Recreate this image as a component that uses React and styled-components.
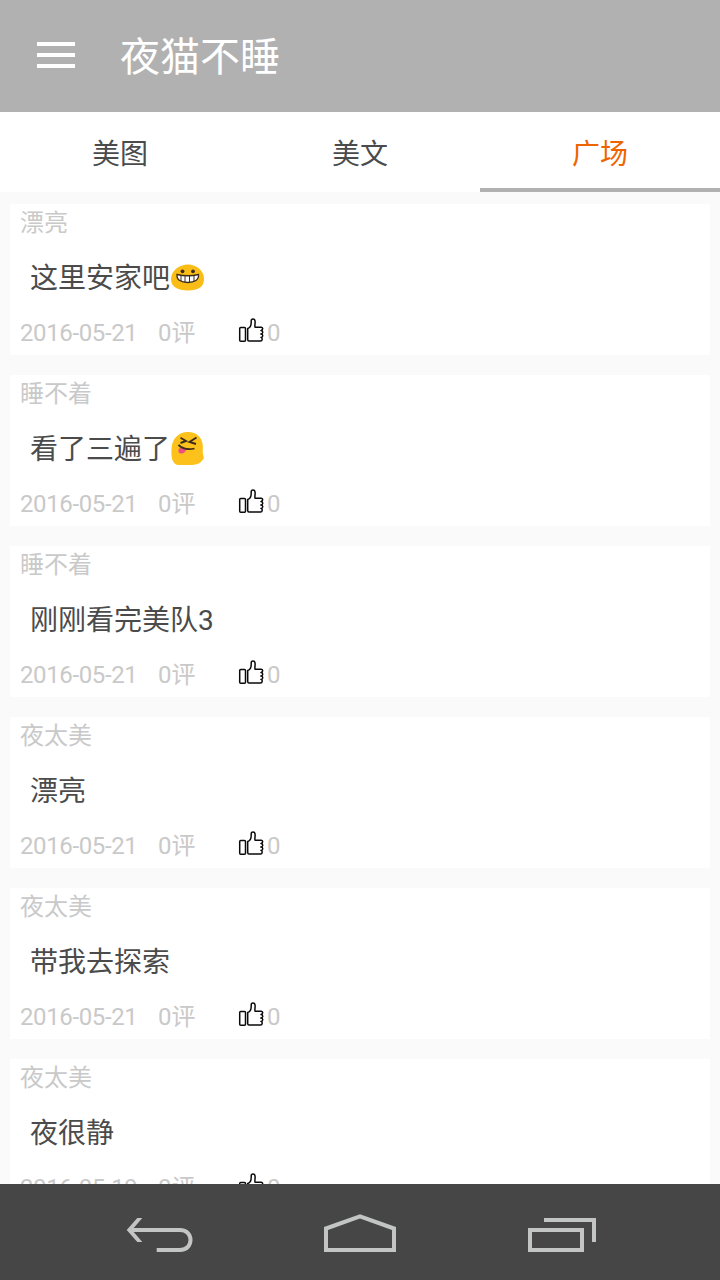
import React from "react";
import styled, { createGlobalStyle } from "styled-components";

const GlobalStyle = createGlobalStyle`
  * { box-sizing: border-box; }
  body {
    margin: 0;
    background: #fafafa;
    font-family: Roboto, "Noto Sans CJK SC", sans-serif;
  }
`;

const Screen = styled.div`
  display: flex;
  flex-direction: column;
  width: 720px;
  height: 1280px;
  overflow: hidden;
  background: #fafafa;
`;

const Header = styled.header`
  flex: none;
  display: flex;
  align-items: center;
  gap: 44px;
  height: 112px;
  padding-left: 37px;
  background: #b1b1b1;
`;

const Title = styled.h1`
  margin: 0;
  padding-top: 4px;
  color: #fff;
  font-size: 40px;
  font-weight: 400;
  line-height: 60px;
`;

const Tabs = styled.nav`
  flex: none;
  display: grid;
  grid-template-columns: repeat(3, 1fr);
  height: 80px;
  background: #fff;
`;

const Tab = styled.div`
  display: flex;
  justify-content: center;
  padding-top: 22px;
  font-size: 28px;
  line-height: 42px;
  color: ${(p) => (p.$active ? "#ee6400" : "#4b4b4b")};
  border-bottom: 4px solid ${(p) => (p.$active ? "#b1b1b1" : "transparent")};
`;

const Feed = styled.main`
  flex: 1;
  min-height: 0;
  overflow: hidden;
  display: flex;
  flex-direction: column;
  gap: 20px;
  padding: 12px 10px 0;
`;

const Card = styled.article`
  flex: none;
  display: flex;
  flex-direction: column;
  height: 151px;
  background: #fff;
`;

const Author = styled.div`
  height: 37px;
  padding: 1px 0 0 10px;
  font-size: 24px;
  line-height: 36px;
  color: #c9c9c9;
`;

const Message = styled.div`
  display: flex;
  align-items: center;
  height: 74px;
  padding-left: 20px;
  font-size: 28px;
  line-height: 42px;
  color: #4b4b4b;
`;

const MessageText = styled.span`
  padding-top: 2px;
`;

const Meta = styled.div`
  display: flex;
  height: 36px;
  padding-left: 10px;
  font-size: 24px;
  line-height: 36px;
  color: #c9c9c9;
`;

const PostDate = styled.span`
  width: 138px;
  letter-spacing: -0.38px;
`;

const Comments = styled.span`
  width: 80px;
`;

const Likes = styled.span`
  display: flex;
  gap: 3px;
`;

const NavBar = styled.footer`
  flex: none;
  display: flex;
  justify-content: center;
  height: 96px;
  padding-top: 24px;
  gap: 108px;
  background: #464646;
`;

const MenuIcon = () => (
  <svg width="39" height="28" viewBox="0 0 39 28">
    <path d="M0 2h38M0 13h38M0 24h38" stroke="#fff" strokeWidth="4" />
  </svg>
);

const GrinFace = () => (
  <svg width="36" height="36" viewBox="0 0 36 36">
    <path
      d="M18 4.500C27 4.500 34 11 34 19C34 27 28 30.500 18 30.500C8 30.500 1 27 1 19C1 11 9 4.500 18 4.500Z"
      fill="#f9bd16"
    />
    <circle cx="12.500" cy="11.300" r="1.900" fill="#3d2d1c" />
    <circle cx="23.000" cy="11.300" r="1.900" fill="#3d2d1c" />
    <path
      d="M7 14.500Q18 17 28.500 14.500C29 20 24.500 22.500 18 22.500C11 22.500 6.500 20 7 14.500Z"
      fill="#fff"
      stroke="#3d2d1c"
      strokeWidth="1.300"
    />
    <path d="M11 15.500v5.500M15 16v6.500M19.500 16v6.500M24 15.500v6" stroke="#3d2d1c" strokeWidth="1" />
  </svg>
);

const TongueFace = () => (
  <svg width="36" height="36" viewBox="0 0 36 36">
    <path
      d="M1.500 18C2 7 9 1 18 1C27 1 32.500 7 32.800 15C32.900 19 32.500 22 33.300 24.500C34.500 27 33.500 28.500 32 29.500C30 33 25 34 20 34H9C2.500 34 1 27 1.500 18Z"
      fill="#fcc21b"
    />
    <path
      d="M10.500 6.800l5.500 3.200l-5.500 2M26.500 6.500l-7 4.500l6.500 2"
      fill="none"
      stroke="#3d2d1c"
      strokeWidth="1.900"
    />
    <path d="M10 16.500C7 20 8.500 23 12 22.500C14.500 22 15.500 20.500 16.500 18Z" fill="#ed4f83" />
    <path d="M8.500 13.800C11 17.500 18 19 24.500 17.500" fill="none" stroke="#3d2d1c" strokeWidth="1.700" />
  </svg>
);

const ThumbIcon = () => (
  <svg width="26" height="28" viewBox="0 0 26 28" fill="none" stroke="#0a0a0a" strokeWidth="1.500">
    <rect x="1.700" y="12.500" width="5.800" height="13.700" rx="1" />
    <path
      strokeLinejoin="round"
      d="M9.700 13.500C12.500 12.700 13.200 10 13.200 7.500V5.800C13.200 3.400 16.700 3.400 17 5.800C17.500 8 16.500 10 17 12.200H23.300C25.300 12.600 25 14.900 22.900 15.600C25.400 16 25.400 18.400 22.900 19C25.400 19.400 25.400 21.800 22.900 22.400C24.900 23 24.500 26 22.500 26H11C10 26 9.700 25.300 9.700 24.500Z"
    />
  </svg>
);

const BackIcon = () => (
  <svg width="96" height="48" viewBox="0 0 96 48">
    <path d="M23 22H72C86 22 86 42 72 42H48.700" fill="none" stroke="#c3c4c4" strokeWidth="4" />
    <path d="M18.700 22L29.300 10H34.300L24 22L34.300 34H29.300Z" fill="#c3c4c4" />
  </svg>
);

const HomeIcon = () => (
  <svg width="96" height="48" viewBox="0 0 96 48" fill="none" stroke="#c3c4c4" strokeWidth="4">
    <path d="M14 42V20.500L48 8.300L82 20.500V42Z" />
  </svg>
);

const RecentsIcon = () => (
  <svg width="96" height="48" viewBox="0 0 96 48" fill="none" stroke="#c3c4c4" strokeWidth="4">
    <rect x="14" y="22" width="52" height="20" />
    <path d="M28 12H78V34" />
  </svg>
);

const posts = [
  { author: "漂亮", text: "这里安家吧", Face: GrinFace, date: "2016-05-21" },
  { author: "睡不着", text: "看了三遍了", Face: TongueFace, date: "2016-05-21" },
  { author: "睡不着", text: "刚刚看完美队3", date: "2016-05-21" },
  { author: "夜太美", text: "漂亮", date: "2016-05-21" },
  { author: "夜太美", text: "带我去探索", date: "2016-05-21" },
  { author: "夜太美", text: "夜很静", date: "2016-05-19" },
];

function Post({ author, text, Face, date }) {
  return (
    <Card>
      <Author>{author}</Author>
      <Message>
        <MessageText>{text}</MessageText>
        {Face && <Face />}
      </Message>
      <Meta>
        <PostDate>{date}</PostDate>
        <Comments>0评</Comments>
        <Likes>
          <ThumbIcon />
          <span>0</span>
        </Likes>
      </Meta>
    </Card>
  );
}

export default function App() {
  return (
    <>
      <GlobalStyle />
      <Screen>
        <Header>
          <MenuIcon />
          <Title>夜猫不睡</Title>
        </Header>
        <Tabs>
          <Tab>美图</Tab>
          <Tab>美文</Tab>
          <Tab $active>广场</Tab>
        </Tabs>
        <Feed>
          {posts.map((post, i) => (
            <Post key={i} {...post} />
          ))}
        </Feed>
        <NavBar>
          <BackIcon />
          <HomeIcon />
          <RecentsIcon />
        </NavBar>
      </Screen>
    </>
  );
}
